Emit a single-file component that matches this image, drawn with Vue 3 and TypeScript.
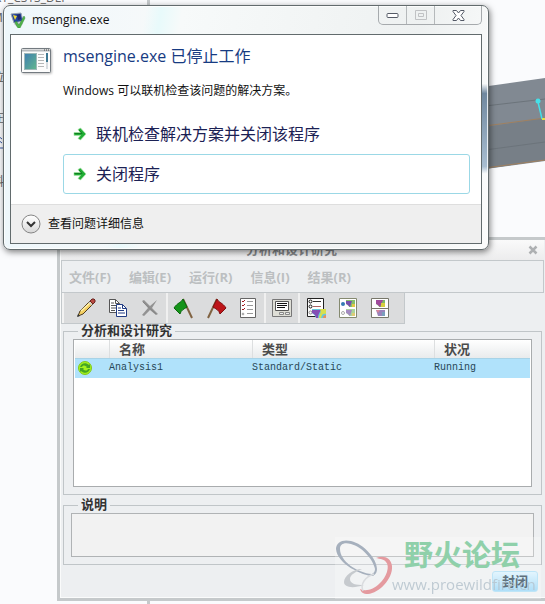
<script setup lang="ts">
import { ref } from 'vue'

interface Study {
  name: string
  type: string
  status: string
}

const menus: string[] = ['文件(F)', '编辑(E)', '运行(R)', '信息(I)', '结果(R)']
const tools: string[] = ['edit', 'copy', 'delete', 'start', 'stop', 'check', 'status', 'define', 'compare', 'split']
const groupStarts: string[] = ['start', 'status', 'define']
const labels: Record<string, string> = {
  edit: '编辑', copy: '复制', delete: '删除', start: '开始', stop: '停止',
  check: '检查', status: '状态', define: '定义', compare: '比较', split: '分割',
}
const studies: Study[] = [{ name: 'Analysis1', type: 'Standard/Static', status: 'Running' }]
const actions: string[] = ['联机检查解决方案并关闭该程序', '关闭程序']
const description = ref('')
</script>

<template>
  <main class="desktop">
    <svg class="model" width="60" height="96" viewBox="0 0 60 96" aria-hidden="true">
      <path d="M0 8.500L60 0V83L0 91z" fill="#818992" />
      <path d="M0 49L60 40V82L0 91z" fill="#777f87" />
      <path d="M0 28L60 21M0 72L60 64" stroke="#6c747b" fill="none" />
      <path d="M0 48L60 40M0 90L60 82" stroke="#a0805f" fill="none" />
      <path d="M53 24l4 17" stroke="#45e0e8" stroke-width="1.500" />
      <circle cx="53" cy="23" r="2.500" fill="#45e0e8" />
      <path d="M57 41h3" stroke="#e4e04a" stroke-width="2" />
    </svg>
    <div class="tree" aria-hidden="true">
      <span class="tree-top">RT_CSYS_DEF</span>
      <span>M</span>
      <span>L</span>
      <span>a</span>
      <span>拉</span>
      <span class="tree-gap">在</span>
      <svg width="12" height="20" viewBox="0 0 12 20"><path d="M0 1l10 8M0 5l10 8M0 9l5 4M0 18h12" stroke="#3657a0" fill="none" /></svg>
      <span class="tree-gap">料</span>
    </div>
    <i class="rail rail-top"></i>
    <i class="rail rail-bottom"></i>

    <section class="studies">
      <header class="studies-title">
        <span>分析和设计研究</span>
        <button class="studies-x" aria-label="关闭">
          <svg width="10" height="10" viewBox="0 0 10 10"><path d="M1.500 1.500l7 7M8.500 1.500l-7 7" stroke="#aeb0b2" stroke-width="2.500" /></svg>
        </button>
      </header>
      <nav class="menubar">
        <button v-for="m in menus" :key="m">{{ m }}</button>
      </nav>
      <div class="toolbar">
        <button v-for="t in tools" :key="t" class="tool" :class="{ 'group-start': groupStarts.includes(t) }" :aria-label="labels[t]">
          <svg width="22" height="22" viewBox="0 0 22 22">
            <g v-if="t === 'edit'">
              <path d="M3 19l2-5L15 4l3 3L8 17z" fill="#f3cf62" stroke="#4d3b20" />
              <path d="M6 14L16 5" stroke="#fff2ad" stroke-width="1.500" />
              <path d="M15 4l2-2h2l1 1v2l-2 2z" fill="#b94b43" stroke="#6b2520" />
              <path d="M14 5l3 3" stroke="#d0d0d0" stroke-width="1.500" />
              <path d="M2 20l1-3 2 2z" fill="#333" />
            </g>
            <g v-else-if="t === 'copy'">
              <path d="M2.500 2.500h6l4 4v9h-10z" fill="#fff" stroke="#555" />
              <path d="M8.500 2.500v4h4M4 6h3M4 8.500h5M4 11h5M4 13.500h4" fill="none" stroke="#555" />
              <path d="M9.500 7.500h6l4 4v8h-10z" fill="#fff" stroke="#203b83" />
              <path d="M15.500 7.500v4h4M11 11h3M11 13.500h6M11 16h7" fill="none" stroke="#203b83" />
            </g>
            <g v-else-if="t === 'delete'">
              <path d="M3 4l2-1 6 6 7-6-5 8 6 6-2 1-6-5-6 6-2-1 6-7z" fill="#929292" />
              <path d="M4 5l13 12" stroke="#858585" />
            </g>
            <g v-else-if="t === 'start'">
              <path d="M10 2l9 19" stroke="#806342" stroke-width="2" />
              <path d="M10 2C9 5 4 6 1 11l6 6c1-4 4-5 7-7z" fill="#159419" stroke="#08660c" />
            </g>
            <g v-else-if="t === 'stop'">
              <path d="M12 2L3 21" stroke="#806342" stroke-width="2" />
              <path d="M12 2c1 3 6 4 9 9l-6 6c-1-4-4-5-7-7z" fill="#bd1519" stroke="#7d1011" />
            </g>
            <g v-else-if="t === 'check'">
              <path d="M3.500 1.500h15v19h-15z" fill="#fff" stroke="#656565" />
              <path d="M5 4l1 1 2-2M5 8l1 1 2-2M5 12l1 1 2-2" fill="none" stroke="#a31c21" />
              <circle cx="6" cy="17" r="1" fill="#bbb" stroke="#888" stroke-width=".5" />
              <path d="M10 4.500h6M10 8.500h6M10 12.500h6M10 16.500h6" stroke="#999" />
            </g>
            <g v-else-if="t === 'status'">
              <path d="M1.500 2.500h19v17h-19z" fill="#deded6" stroke="#777" />
              <path d="M4.500 4.500h13v9h-13z" fill="#fff" stroke="#555" />
              <path d="M6 6.500h10M6 8.500h10M6 10.500h8" stroke="#111" />
              <path d="M8.500 15.500h4v2h-4zM14.500 15.500h4v2h-4z" fill="#eee" stroke="#888" />
            </g>
            <g v-else-if="t === 'define'">
              <path d="M2.500 1.500h16v18h-16z" fill="#fff" stroke="#222" />
              <circle cx="5.500" cy="4.500" r="1.500" fill="#fff" stroke="#111" />
              <circle cx="5.500" cy="9.500" r="1.500" fill="#fff" stroke="#111" />
              <circle cx="5.500" cy="15.500" r="1.500" fill="#fff" stroke="#888" />
              <path d="M8 4.500h8" stroke="#333" /><path d="M8 9.500h8" stroke="#a66" />
              <path d="M7 12h14v9H11c-1-3-3-4-4-5z" fill="#66c9dd" />
              <path d="M7 13h9c-1 2-3 4-3 8h-2c0-3-2-4-4-5z" fill="#8550b5" />
              <path d="M15 12h6v5c-3-1-4 0-5 4h-2c0-4 3-5 1-9z" fill="#d9df4c" /><path d="M18 21c0-2 1-3 3-3v3z" fill="#e69061" />
            </g>
            <g v-else-if="t === 'compare'">
              <path d="M2.500 1.500h17v19h-17z" fill="#fff" stroke="#858a70" />
              <circle cx="6" cy="7" r="2" fill="#357bb4" /><circle cx="6" cy="16" r="1.500" fill="#fff" stroke="#aaa" />
              <path d="M9 3h9v7h-6c0-2-3-2-3-4z" fill="#86bf6c" /><path d="M9 4h6l-2 6c-2-2-3-3-4-3z" fill="#7850ad" /><path d="M15 7h3v3h-3z" fill="#e2c844" />
              <path d="M9 12h9v7h-6c0-2-3-2-3-4z" fill="#abd49c" /><path d="M9 13h6l-2 6c-2-2-3-3-4-3z" fill="#a48bc1" /><path d="M15 16h3v3h-3z" fill="#e0cb77" />
            </g>
            <g v-else>
              <path d="M2.500 1.500h17v19h-17zM2.500 11.500h17" fill="#fff" stroke="#77776a" />
              <path d="M7 3h9v7h-6c0-2-3-2-3-4z" fill="#7fb86a" /><path d="M7 3h7l-3 7c-2-2-3-3-4-3z" fill="#a04a9c" /><path d="M12 6h4v4h-4z" fill="#d7cf3e" />
              <path d="M7 13h9v6h-7z" fill="#9b83bb" /><path d="M7 13h4l-2 3z" fill="#d9869b" /><path d="M13 15h3v4h-3z" fill="#7a9fbd" />
            </g>
          </svg>
        </button>
      </div>

      <fieldset class="group">
        <legend>分析和设计研究</legend>
        <div class="list">
          <table>
            <colgroup><col class="col-icon"><col class="col-name"><col class="col-type"><col></colgroup>
            <thead>
              <tr><th></th><th>名称</th><th>类型</th><th>状况</th></tr>
            </thead>
            <tbody>
              <tr v-for="s in studies" :key="s.name">
                <td class="state">
                  <svg width="14" height="14" viewBox="0 0 14 14">
                    <circle cx="7" cy="7" r="6.500" fill="#a4f11d" stroke="#80c81b" />
                    <path d="M2 6C3 2 8 1 11 4l1-1v4H8l1-1C7 4 5 4 4 6z" fill="#45a522" />
                    <path d="M12 8c-1 4-6 5-9 2l-1 1V7h4L5 8c2 2 4 2 5 0z" fill="#45a522" />
                  </svg>
                </td>
                <td>{{ s.name }}</td><td>{{ s.type }}</td><td>{{ s.status }}</td>
              </tr>
            </tbody>
          </table>
        </div>
      </fieldset>

      <fieldset class="group notes">
        <legend><label for="notes">说明</label></legend>
        <textarea id="notes" v-model="description" readonly></textarea>
      </fieldset>

      <footer class="studies-footer">
        <button class="seal">封闭</button>
      </footer>

      <div class="watermark">
        <svg width="60" height="58" viewBox="0 0 60 58" aria-hidden="true">
          <path fill-rule="evenodd" d="M1 11C1 4 8 1 16 3c13 3 26 18 26 28 0 3-1 5-4 7C28 38 2 26 1 11zM5 11c0 12 17 24 32 25 2-1 3-3 3-5C38 21 27 9 16 6 9 4 5 6 5 11z" fill="#a6b0bd" />
          <path d="M41 20c7-3 15-1 16 8 1 13-13 27-24 28-5 0-7-2-8-5 6 3 14 0 19-5 8-7 11-18 7-22-2-3-6-3-10-4z" fill="#e49a9f" />
          <path d="M27 31c-9 0-18 7-18 13 0 5 8 7 20 3-8 0-14-1-14-6 0-4 5-7 12-10z" fill="#c6cace" />
          <path d="M28 53c-3-7 2-14 11-17" fill="none" stroke="#dadcdf" stroke-width="1.500" />
        </svg>
        <div class="watermark-text">
          <strong>野火论坛</strong>
          <span>www.proewildfire.cn</span>
        </div>
      </div>
    </section>

    <section class="dialog" role="dialog" aria-labelledby="dialog-title">
      <header class="dialog-bar">
        <svg width="16" height="16" viewBox="0 0 16 16" aria-hidden="true">
          <path d="M1 2l10-1 2 8-9 2z" fill="#25449b" stroke="#98a3af" />
          <path d="M3 3l4 1-2 4z" fill="#f0da36" /><path d="M7 3l3-1 1 5-3 1z" fill="#1d286c" />
          <path d="M4 12l7-2 2 2-6 3z" fill="#c5c9ce" />
          <path d="M6 9l3 4 5-9 1 2-5 10H8L5 11z" fill="#4fb449" stroke="#328a35" stroke-width=".5" />
        </svg>
        <span>msengine.exe</span>
        <div class="caption">
          <button aria-label="最小化"><svg width="13" height="7" viewBox="0 0 13 7"><rect x="1" y="1.500" width="11" height="4" rx="1" fill="#fff" stroke="#555b66" /></svg></button>
          <button aria-label="最大化" disabled><svg width="12" height="10" viewBox="0 0 12 10"><path d="M.5.500h11v9H.5zM3.500 3.500h5v3h-5z" fill="none" stroke="#c0c2c4" /></svg></button>
          <button class="caption-x" aria-label="关闭"><svg width="13" height="11" viewBox="0 0 13 11"><path d="M1 .5h3.500l2 2.500 2-2.500H12v1L9 5.500l3 4v1H8.500l-2-2.500-2 2.500H1v-1l3-4-3-4z" fill="#fff" stroke="#535966" /></svg></button>
        </div>
      </header>
      <div class="client">
        <div class="message">
          <svg class="app-icon" width="31" height="26" viewBox="0 0 31 26" aria-hidden="true">
            <defs><linearGradient id="pane" x2="1" y2="1"><stop stop-color="#3f7eb0" /><stop offset="1" stop-color="#62b78e" /></linearGradient></defs>
            <rect x=".5" y=".5" width="29" height="24" rx="1" fill="#fcfcfc" stroke="#737a80" />
            <path d="M1 2.500h28" stroke="#b6babd" stroke-width="2" /><path d="M23 2h1M25 2h1M27 2h1" stroke="#444" />
            <rect x="3.500" y="5.500" width="12" height="16" fill="url(#pane)" stroke="#9eb8b8" />
            <path d="M17 6.500h6M17 9.500h6M17 12.500h6M17 15.500h6M17 18.500h6" stroke="#b5b7b8" />
            <path d="M26 5v9" stroke="#3d7792" stroke-width="2" /><path d="M26 14v7" stroke="#d7dce0" stroke-width="2" />
          </svg>
          <h1 id="dialog-title">msengine.exe 已停止工作</h1>
          <p>Windows 可以联机检查该问题的解决方案。</p>
          <div class="actions">
            <button v-for="(a, i) in actions" :key="a" class="action" :class="{ focused: i === 1 }">
              <svg width="14" height="14" viewBox="0 0 14 14" aria-hidden="true">
                <path d="M1 5.500h6.500L5 2.500 7.500 1 13 7l-5.500 6L5 11.500l2.500-3H1z" fill="#21ad35" stroke="#a8e2a6" stroke-width=".7" />
                <path d="M1.500 6.500H9L6 3" fill="none" stroke="#128022" />
              </svg>
              {{ a }}
            </button>
          </div>
        </div>
        <button class="details">
          <svg width="20" height="20" viewBox="0 0 20 20" aria-hidden="true">
            <defs><linearGradient id="knob" x2="0" y2="1"><stop stop-color="#fff" /><stop offset=".5" stop-color="#eee" /><stop offset="1" stop-color="#d6d6d6" /></linearGradient></defs>
            <circle cx="10" cy="10" r="9" fill="url(#knob)" stroke="#858585" />
            <path d="M6 8l4 4 4-4" fill="none" stroke="#333" stroke-width="2" />
          </svg>
          查看问题详细信息
        </button>
      </div>
    </section>
  </main>
</template>

<style>
body { background: #fafbfd; }
</style>

<style scoped>
* { box-sizing: border-box; }
button { margin: 0; padding: 0; border: 0; background: none; font: inherit; color: inherit; }
svg { display: block; flex: none; }
.desktop {
  position: relative;
  min-height: 100vh;
  overflow: hidden;
  background: #fafbfd;
  color: #111;
  font: 12px/16px "Open Sans", "Noto Sans CJK SC", sans-serif;
}
.model { position: absolute; top: 78px; right: 0; }
.tree {
  position: absolute;
  top: -10px;
  left: -8px;
  display: flex;
  flex-direction: column;
  gap: 4px;
  color: #666;
  font-size: 12px;
}
.tree-gap { margin-top: 20px; }
.tree-top { padding-left: 2px; }
.rail { position: absolute; left: 147px; width: 3px; height: 5px; background: #c5c9cb; }
.rail-top { top: 0; }
.rail-bottom { top: 600px; }

.studies {
  position: absolute;
  top: 237px;
  left: 57px;
  right: 0;
  padding: 0 1px 6px;
  border: 3px solid #c5c9cb;
  border-right: 0;
  background: #edeff1;
  box-shadow: inset 1px 0 #fafbfb, inset 0 -1px #fafbfb;
  font-family: "Liberation Sans", "Noto Sans CJK SC", sans-serif;
}
.studies-title {
  display: flex;
  align-items: center;
  justify-content: center;
  height: 20px;
  background: linear-gradient(#fafafa, #ececed);
  color: #858789;
  font-size: 13px;
  font-weight: bold;
}
.studies-title span { flex: 1; text-align: center; line-height: 20px; }
.studies-x { padding: 6px; }
.menubar {
  display: flex;
  gap: 18px;
  height: 33px;
  padding: 0 7px;
  border: 1px solid #c3c8cb;
  color: #bcbfc1;
  font: bold 13px/32px "Open Sans", "Noto Sans CJK SC", sans-serif;
}
.toolbar {
  display: flex;
  width: fit-content;
  height: 31px;
  padding: 0 8px;
  border: solid #c3c8cb;
  border-width: 0 1px 1px;
  background: #dbdcdd;
  box-shadow: inset 2px 0 #f3f3f3;
}
.tool { display: grid; place-items: center; width: 32px; }
.group-start { width: 34px; border-left: 2px solid #f0f0f0; }
.group {
  min-width: 0;
  margin: 0 2px 3px;
  padding: 1px 9px 7px;
  border: 1px solid #c0c5c8;
}
legend { margin-left: 5px; padding: 0 3px; color: #333; font-size: 13px; line-height: 14px; font-weight: bold; }
.list { height: 148px; padding: 0 1px; border: 1px solid #a9acae; background: #fff; }
table { width: 100%; table-layout: fixed; border-collapse: collapse; }
.col-icon { width: 34px; }
.col-name { width: 143px; }
.col-type { width: 182px; }
th {
  height: 18px;
  padding: 2px 0 0 10px;
  background: linear-gradient(#fff, #e9ebec);
  box-shadow: inset 1px 0 #dddfe0;
  color: #4b4b4b;
  font-size: 13px;
  line-height: 16px;
  text-align: left;
}
th:first-child { box-shadow: none; }
td {
  height: 19px;
  padding: 0;
  background: #b0e2fb;
  border-top: 1px solid #a8d3e7;
  color: #274756;
  font: 10px/18px "Liberation Mono", monospace;
}
.state { padding-left: 3px; }
.notes { margin-bottom: 6px; padding: 1px 7px 7px; }
.notes legend { margin-left: 7px; }
textarea {
  display: block;
  width: 100%;
  height: 44px;
  border: 1px solid #b0b3b5;
  border-radius: 0;
  background: #f2f2f2;
  outline: 0;
  resize: none;
}
.studies-footer { display: flex; justify-content: flex-end; padding-right: 6px; }
.seal {
  width: 46px;
  height: 21px;
  border: 1px solid #a9dcf4;
  border-radius: 3px;
  background: linear-gradient(#d9f1fd, #94d4f6);
  color: #2b4252;
  font-size: 13px;
  font-weight: bold;
}
.watermark {
  position: absolute;
  right: 4px;
  bottom: -1px;
  display: flex;
  width: 206px;
  height: 62px;
  padding-top: 1px;
  background: rgba(255, 255, 255, .25);
  pointer-events: none;
}
.watermark-text { display: flex; flex-direction: column; margin-left: -3px; color: #b3c1cb; }
.watermark strong { padding-left: 12px; color: #8fd0aa; font-size: 29px; line-height: 36px; }
.watermark span { font: 15px/20px "Open Sans", sans-serif; opacity: .8; }

.dialog {
  position: absolute;
  top: 5px;
  left: 3px;
  width: 486px;
  padding: 0 6px 5px;
  border: 1px solid #626b6d;
  border-radius: 7px;
  background:
    linear-gradient(transparent 32%, #70889f 36%, #a8bdd0 66%, transparent 69%) right / 6px 100% no-repeat,
    linear-gradient(90deg, #eef7fb, transparent) left / 150px 100% no-repeat,
    linear-gradient(100deg, #f6f9fa 0 27%, #e8fafb 30%, #f7fafa 34%, #eef1f1 80%, #fbfcfc);
  box-shadow: inset 0 0 0 1px rgba(255, 255, 255, .8), 1px 2px 6px rgba(0, 0, 0, .5);
}
.dialog-bar { display: flex; align-items: center; height: 28px; color: #111; }
.dialog-bar > span { margin-left: 6px; }
.caption {
  display: flex;
  align-self: flex-start;
  height: 19px;
  margin-left: auto;
  border: 1px solid #a6aaad;
  border-top: 0;
  border-radius: 0 0 5px 5px;
}
.caption button { display: grid; place-items: center; width: 28px; border-right: 1px solid #b5b9bb; }
.caption .caption-x { width: 46px; border: 0; }
.client { border: 1px solid #626b6d; background: #fff; }
.message {
  display: grid;
  grid-template-columns: 42px 1fr;
  padding: 11px 11px 10px 10px;
}
.app-icon { margin-top: 2px; filter: drop-shadow(1px 1px 1px #bbb); }
h1 { margin: 0; color: #173b82; font-size: 16px; line-height: 20px; font-weight: 400; }
p { grid-column: 2; margin: 9px 0 0; color: #111; }
.actions { grid-column: 2; margin-top: 15px; }
.action {
  display: flex;
  align-items: center;
  gap: 9px;
  width: 100%;
  height: 40px;
  padding-left: 9px;
  border: 1px solid transparent;
  border-radius: 3px;
  color: #1b2154;
  font-size: 16px;
}
.focused { border-color: #9bd8e6; }
.details {
  display: flex;
  align-items: center;
  gap: 7px;
  width: 100%;
  height: 39px;
  padding-left: 10px;
  border-top: 1px solid #dedede;
  background: #efefef;
}
</style>
